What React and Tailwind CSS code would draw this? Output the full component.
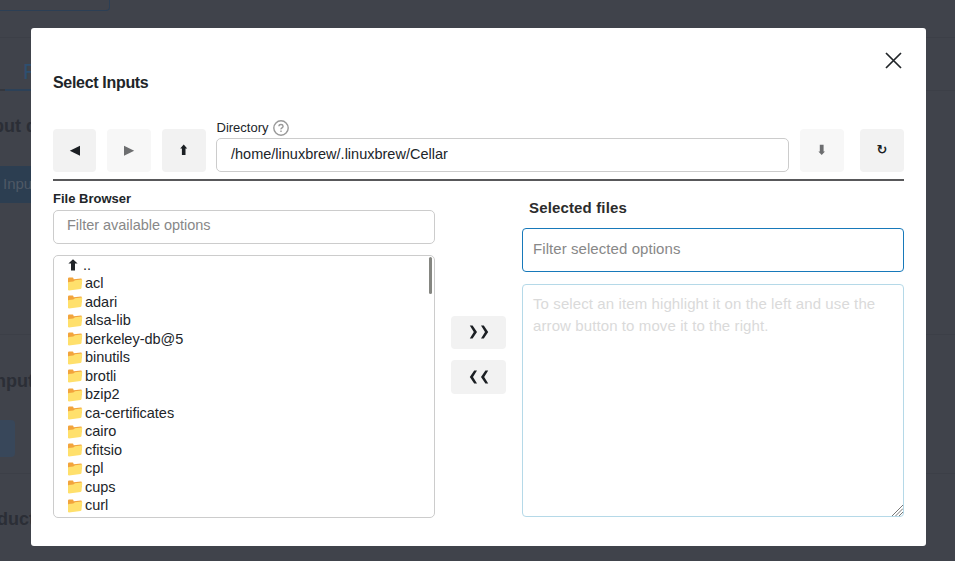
import React from "react";

const folders = ["acl", "adari", "alsa-lib", "berkeley-db@5", "binutils", "brotli", "bzip2", "ca-certificates", "cairo", "cfitsio", "cpl", "cups", "curl"];

function Glyph({ d, className = "", size = 16 }) {
  return (
    <svg width={size} height={size} viewBox="0 0 16 16" className={className} fill="currentColor">
      <path d={d} />
    </svg>
  );
}

const LEFT = "M2.8 7.7 13 2.7v10z";
const RIGHT = "M13.2 7.7 3 2.7v10z";
const UP = "M7.7 1.4 11.2 5.6H9.5V12H5.9V5.6H4.2z";
const DOWN = "M7.7 12 4.4 8.4H5.8V1.8H9.6V8.4H11z";

function ToolButton({ children, className = "", disabled }) {
  return (
    <button disabled={disabled} className={`flex h-[43px] shrink-0 items-center justify-center rounded-[4px] ${disabled ? "bg-[#f7f7f7] text-[#6d6e70]" : "bg-[#f2f2f2] text-[#1b1f23]"} ${className}`}>
      {children}
    </button>
  );
}

function Folder() {
  return (
    <svg width="16" height="16" viewBox="0 0 16 16" className="-ml-px shrink-0">
      <path d="M1 2.8Q1 1.6 2.1 1.6H5.6Q6.3 1.6 6.5 2.4L6.7 3.2 14 2.6Q14.8 2.6 14.8 3.4V8L1.4 14Q1 14 1 13z" fill="#f2a43c" />
      <path d="M1 6.9Q1 6.2 1.8 6.1L6.3 5.6 8 4.3 14.5 3.5Q15.3 3.4 15.2 4.3L14.5 12Q14.4 12.8 13.6 12.9L2 14.4Q1 14.5 1 13.6z" fill="#ffe06c" />
    </svg>
  );
}

function Chevrons({ left }) {
  return (
    <svg width="20" height="14" viewBox="0 0 20 14" fill="#1b1f23" className={left ? "-scale-x-100" : "-translate-y-px"}>
      <path d="M.8 .5H3.6L8 7 3.6 13.5H.8L4.8 7zM12 .5H14.8L19.2 7 14.8 13.5H12L16 7z" />
    </svg>
  );
}

function Backdrop() {
  return (
    <div className="flex h-[561px] w-[955px] flex-col overflow-hidden bg-[#40434b] text-[#2b2e36]">
      <div className="h-[11px] w-[110px] shrink-0 rounded-br-[4px] border-r border-b border-[#2c3f55]" />
      <div className="mt-[26px] h-px shrink-0 bg-[#3c3f47]" />
      <div className="mt-[22px] flex h-[31px] shrink-0 border-b border-[#3c3f47]">
        <div className="h-[31px] w-[5px] border-b-2 border-[#34373e]" />
        <div className="h-[31px] w-[95px] border-b-2 border-[#2c4158] pl-[18px] text-[22px] leading-[24px] text-[#2e4f70]">F</div>
      </div>
      <div className="mt-[22px] h-[26px] shrink-0 text-[18px] leading-[26px] font-bold"><span className="-ml-[7px]">put data</span></div>
      <div className="mt-[27px] h-[37px] w-[90px] shrink-0 bg-[#2c3e51] pl-[3px] text-[15px] leading-[36px] text-[#4f5966]">Input</div>
      <div className="mt-[131px] h-px shrink-0 bg-[#3c3f47]" />
      <div className="mt-[33px] h-[26px] shrink-0 text-[18px] leading-[26px] font-bold"><span className="-ml-[5px]">nputs</span></div>
      <div className="mt-[26px] h-[37px] w-[15px] shrink-0 rounded-r-[4px] bg-[#38475a]" />
      <div className="mt-[16px] h-px shrink-0 bg-[#3c3f47]" />
      <div className="mt-[32px] h-[26px] shrink-0 text-[18px] leading-[26px] font-bold"><span className="-ml-[3px]">ducts</span></div>
    </div>
  );
}

export default function App() {
  return (
    <div className="relative h-[561px] w-[955px] overflow-hidden font-['Liberation_Sans',Arial,sans-serif] text-[#212529]">
      <Backdrop />
      <div role="dialog" className="absolute top-[28px] left-[31px] flex h-[518px] w-[895px] flex-col rounded-[3px] bg-white px-[22px]">
        <header className="flex h-[91px] shrink-0 items-start justify-between">
          <h1 className="mt-[44px] text-[16px] leading-[22px] font-bold tracking-[-0.32px]">Select Inputs</h1>
          <button aria-label="Close" className="mt-[24px] mr-[2px]">
            <svg width="17" height="17" viewBox="0 0 17 17" stroke="#212529" strokeWidth="1.7"><path d="M1 1 16 16M16 1 1 16" /></svg>
          </button>
        </header>
        <div className="flex h-[53px] shrink-0 items-end">
          <ToolButton className="w-[43px]"><Glyph d={LEFT} /></ToolButton>
          <ToolButton className="ml-[11px] w-[44px]" disabled><Glyph d={RIGHT} /></ToolButton>
          <ToolButton className="ml-[11px] w-[44px]"><Glyph d={UP} /></ToolButton>
          <div className="ml-[10px] flex w-[573px] flex-col">
            <div className="flex h-[19px] items-start gap-[4px] pl-[0.5px] text-[13px] leading-[18px]">
              <span>Directory</span>
              <svg width="16" height="16" viewBox="0 0 16 16" fill="none" stroke="#999" strokeWidth="1.4" className="mt-[0.5px]">
                <circle cx="8" cy="8" r="7.2" />
                <path d="M5.9 6.3Q6 4.5 8 4.5T10.1 6.2Q10.1 7.1 9 7.8T8 9.4" />
                <path d="M8 10.6V12" />
              </svg>
            </div>
            <div className="h-[34px] rounded-[5px] border border-[#ccc] px-[14px] text-[14.5px] leading-[31px]">/home/linuxbrew/.linuxbrew/Cellar</div>
          </div>
          <ToolButton className="ml-[11px] w-[44px]" disabled><Glyph d={DOWN} /></ToolButton>
          <ToolButton className="ml-[16px] w-[44px]"><span className="mb-[1px] font-['DejaVu_Sans'] text-[13px] leading-[16px] font-bold">↻</span></ToolButton>
        </div>
        <hr className="mt-[7px] h-[2px] shrink-0 border-0 bg-[#58585a]" />
        <main className="flex h-[337px] shrink-0">
          <section className="flex w-[382px] flex-col">
            <h2 className="mt-[8px] h-[21px] text-[13px] leading-[19px] font-bold">File Browser</h2>
            <div className="h-[34px] shrink-0 rounded-[5px] border border-[#ccc] px-[13px] text-[14.5px] leading-[29px] tracking-[-0.03px] text-[#888]">Filter available options</div>
            <div className="mt-[11px] flex h-[263px] shrink-0 justify-between overflow-hidden rounded-[5px] border border-[#ccc] pl-[14px]">
              <ul className="-mt-[0.25px] text-[14.5px] leading-[18.5px]">
                <li className="flex h-[18.5px] items-center"><Glyph className="-ml-px" d="M6 2.2 10.6 6.6H8V13.5H4V6.6H1.4z" /><span>..</span></li>
                {folders.map((name) => (
                  <li key={name} className="flex h-[18.5px] items-center gap-[2px]"><Folder /><span className="tracking-[-0.02px]">{name}</span></li>
                ))}
              </ul>
              <div className="mt-px mr-[2px] h-[37px] w-[3px] rounded-full bg-[#858681]" />
            </div>
          </section>
          <div className="ml-[16px] flex w-[55px] flex-col gap-[11px] pt-[135px]">
            <button className="flex h-[33px] items-center justify-center rounded-[4px] bg-[#f2f2f2]"><Chevrons /></button>
            <button className="flex h-[34px] items-center justify-center rounded-[4px] bg-[#f2f2f2]"><Chevrons left /></button>
          </div>
          <section className="ml-[16px] flex w-[382px] flex-col">
            <h2 className="mt-[15px] ml-[7px] h-[32px] text-[15px] leading-[24px] font-bold tracking-[0.15px] text-[#2c2c2c]">Selected files</h2>
            <div className="h-[44px] shrink-0 rounded-[4px] border border-[#1779ba] px-[10px] text-[15px] leading-[40px] tracking-[0.07px] text-[#888]">Filter selected options</div>
            <div className="mt-[12px] flex h-[233px] shrink-0 flex-col justify-between rounded-[4px] border border-[#b5d9e8] pt-[8px] pl-[10px] text-[15px] leading-[22px] tracking-[0.1px] text-[#dadada]">
              <p className="whitespace-nowrap">To select an item highlight it on the left and use the<br />arrow button to move it to the right.</p>
              <svg width="11" height="11" viewBox="0 0 11 11" className="self-end" stroke="#777" strokeWidth="1"><path d="M0 11 11 0M3.5 11 11 3.5M7 11 11 7" /></svg>
            </div>
          </section>
        </main>
      </div>
    </div>
  );
}
